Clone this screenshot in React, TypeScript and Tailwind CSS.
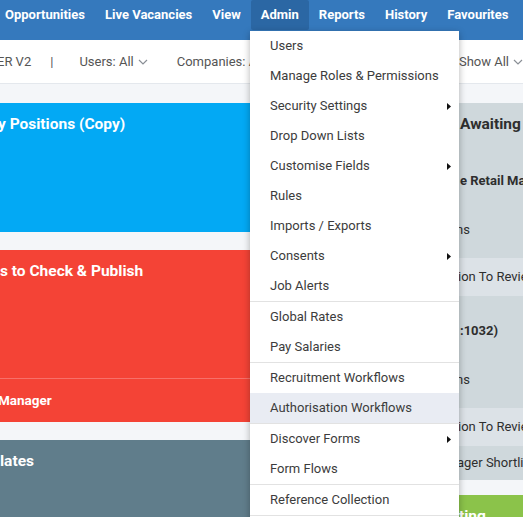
import React from "react";

const navItems = ["Opportunities", "Live Vacancies", "View", "Admin", "Reports", "History", "Favourites"];

type MenuEntry = { label: string; sub?: boolean; active?: boolean } | "divider";

const adminMenu: MenuEntry[] = [
  { label: "Users" },
  { label: "Manage Roles & Permissions" },
  { label: "Security Settings", sub: true },
  { label: "Drop Down Lists" },
  { label: "Customise Fields", sub: true },
  { label: "Rules" },
  { label: "Imports / Exports" },
  { label: "Consents", sub: true },
  { label: "Job Alerts" },
  "divider",
  { label: "Global Rates" },
  { label: "Pay Salaries" },
  "divider",
  { label: "Recruitment Workflows" },
  { label: "Authorisation Workflows", active: true },
  "divider",
  { label: "Discover Forms", sub: true },
  { label: "Form Flows" },
  "divider",
  { label: "Reference Collection" },
  "divider",
  { label: "Email Templates" },
];

function Chevron() {
  return (
    <svg width="10" height="6" viewBox="0 0 10 6" className="ml-[4px] mt-[1px]">
      <polyline points="1,1 5,5 9,1" fill="none" stroke="#8a8f96" strokeWidth="1.2" />
    </svg>
  );
}

function SubArrow() {
  return (
    <svg width="4" height="7" viewBox="0 0 4 7">
      <polygon points="0,0 4,3.5 0,7" fill="#111" />
    </svg>
  );
}

export default function App() {
  return (
    <div className="relative w-[523px] h-[517px] overflow-hidden bg-[#f4f6f9] font-['Roboto',sans-serif]">
      {/* top navigation */}
      <nav className="h-[40px] bg-[#3579bd] flex items-start">
        {navItems.map((item, i) => (
          <div
            key={item}
            className={`h-[30px] leading-[30px] text-[13px] font-bold text-white whitespace-nowrap pr-[10px] ${
              i === 0 ? "pl-[5px]" : "pl-[10px]"
            } ${item === "Admin" ? "bg-[#2b67a4] rounded-[2px]" : ""}`}
          >
            {item}
          </div>
        ))}
      </nav>

      {/* filter bar */}
      <div className="h-[44px] bg-white border-b border-[#e4e8ed] flex items-center text-[13px] text-[#555] whitespace-nowrap">
        <span className="-ml-[3px]">ER V2</span>
        <span className="ml-[19px]">|</span>
        <span className="ml-[26px] flex items-center">
          Users: All
          <Chevron />
        </span>
        <span className="ml-[29px] flex items-center">
          Companies: All
          <Chevron />
        </span>
        <span className="ml-auto flex items-center">
          Show All
          <Chevron />
        </span>
      </div>

      {/* dashboard tiles */}
      <main className="flex gap-[19px] pt-[19px]">
        <div className="w-[440px] shrink-0 flex flex-col gap-[18px]">
          <div className="h-[129px] bg-[#03a9f4] pt-[11px]">
            <div className="-ml-[2px] text-[15.5px] leading-[20px] font-bold text-white whitespace-nowrap">
              y Positions (Copy)
            </div>
          </div>

          <div className="bg-[#f44336]">
            <div className="h-[129px] pt-[11px] border-b border-[#f7706a]">
              <div className="text-[15.5px] leading-[20px] font-bold text-white whitespace-nowrap">
                s to Check &amp; Publish
              </div>
            </div>
            <div className="h-[43px] flex items-center -ml-[2px] text-[13.5px] font-bold text-white">Manager</div>
          </div>

          <div className="h-[129px] bg-[#607d8b] pt-[11px]">
            <div className="text-[15.5px] leading-[20px] font-bold text-white whitespace-nowrap">lates</div>
          </div>
        </div>

        <div className="flex-1 min-w-0 flex flex-col gap-[15px] overflow-hidden">
          <div className="h-[377px] bg-[#cfd8dc] text-[#2e2e2e] whitespace-nowrap overflow-hidden">
            <div className="h-[43px] pt-[11px] pl-[1px] text-[15.5px] leading-[20px] font-bold">Awaiting</div>

            {[0, 1].map((n) => (
              <div key={n} className="h-[150px] flex flex-col">
                <div className="h-[70px] flex items-center pl-[1px] text-[13px] font-bold">
                  {n === 0 ? "e Retail Manager" : ":1032)"}
                </div>
                <div className="h-[42px] pt-[4px] -ml-[3px] text-[13px]">ns</div>
                <div className="h-[38px] bg-[#dce2e7] flex items-center -ml-[1px] text-[13px]">
                  ion To Review
                </div>
              </div>
            ))}

            <div className="h-[34px] flex items-center -ml-[2px] text-[13px]">ager Shortlist</div>
          </div>

          <div className="h-[129px] bg-[#8bc34a] pt-[11px]">
            <div className="text-[15.5px] leading-[20px] font-bold text-white whitespace-nowrap">ting</div>
          </div>
        </div>
      </main>

      {/* admin dropdown */}
      <div className="absolute left-[250px] top-[31px] w-[209px] bg-white shadow-[0_2px_7px_rgba(0,0,0,0.3)]">
        {adminMenu.map((entry, i) =>
          entry === "divider" ? (
            <div key={`d${i}`} className="h-px bg-[#e2e2e2]" />
          ) : (
            <div
              key={entry.label}
              className={`h-[30px] flex items-center justify-between pl-[20px] pr-[8px] text-[13px] text-[#3c3c3c] whitespace-nowrap ${
                entry.active ? "bg-[#e9ecf3]" : ""
              }`}
            >
              <span>{entry.label}</span>
              {entry.sub && <SubArrow />}
            </div>
          )
        )}
      </div>
    </div>
  );
}
